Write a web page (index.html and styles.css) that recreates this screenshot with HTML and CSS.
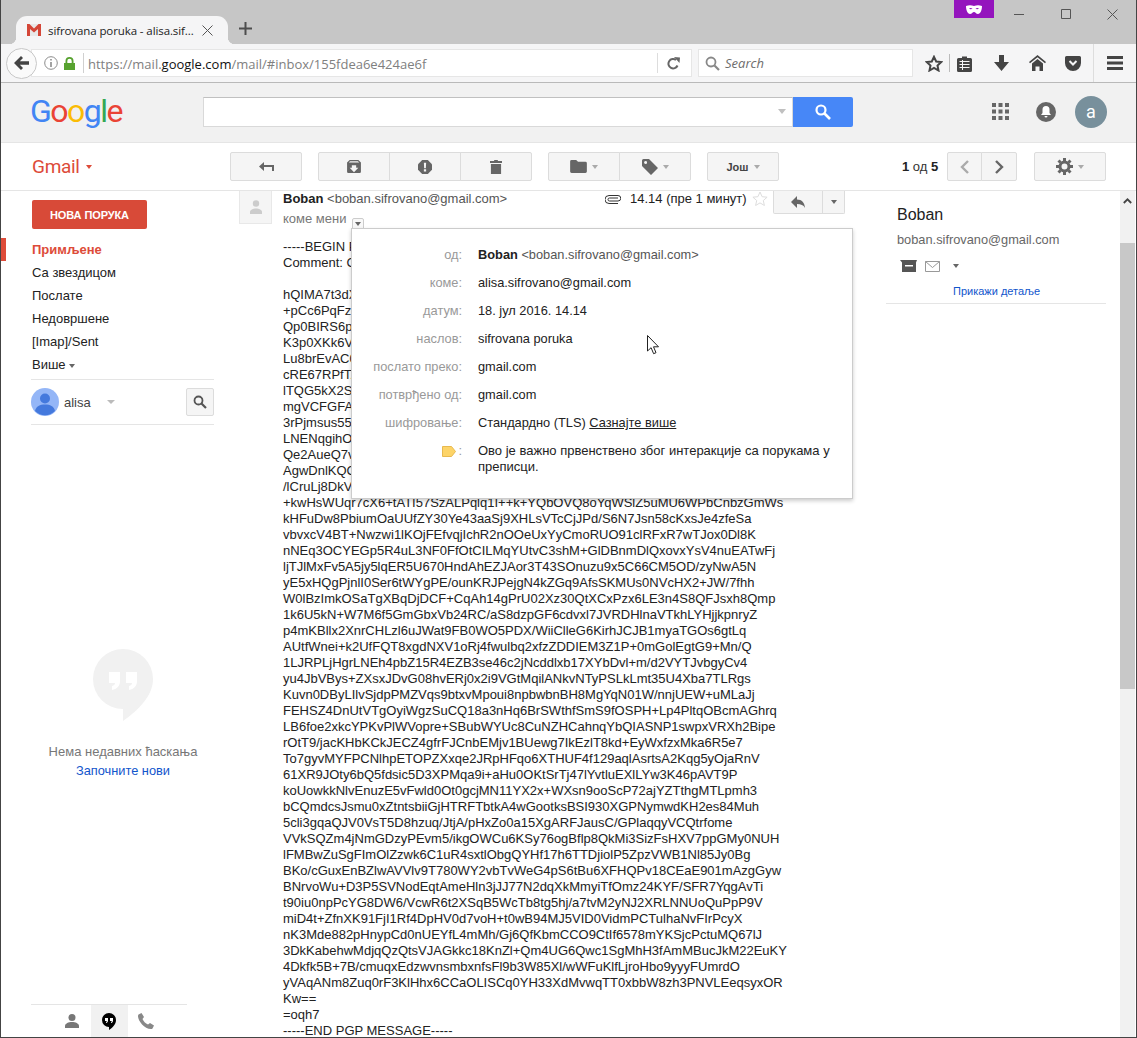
FILE: index.html
```html
<!DOCTYPE html>
<html lang="sr">
<head>
<meta charset="utf-8">
<title>sifrovana poruka</title>
<link rel="stylesheet" href="styles.css">
</head>
<body>
<div class="window">
  <div class="tabstrip">
    <div class="tab">
      <svg class="favicon" width="14" height="12" viewBox="0 0 14 12"><path fill="#e8e8e8" d="M0 0h14v12H0z"/><path fill="#d44638" d="M0 0h2.500L7 4.500 11.500 0H14v12h-3V5L7 8.500 3 5v7H0z"/></svg>
      <span class="tab-title">sifrovana poruka - alisa.sif...</span>
      <svg class="tab-close" width="11" height="11" viewBox="0 0 11 11"><path d="M.5.500l10 10M10.500.500l-10 10" stroke="#555" fill="none"/></svg>
    </div>
    <svg class="newtab" width="13" height="13" viewBox="0 0 13 13"><path d="M6.500 0v13M0 6.500h13" stroke="#4d4d4d" stroke-width="2" fill="none"/></svg>
    <div class="winctl">
      <div class="mask"><svg width="16" height="9" viewBox="0 0 16 9"><path fill="#fff" fill-rule="evenodd" d="M0 1c3-1.300 5.500-1 8 0 2.500-1 5-1.300 8 0 0 4-1.500 8-4 8-2 0-2.500-2-4-2s-2 2-4 2C1.500 9 0 5 0 1zm3 2.500c1 1 2.500 1 3.500.3C5.500 2.800 4 2.700 3 3.500zm10 0c-1-.8-2.500-.7-3.500.3 1 .7 2.500.7 3.500-.3z"/></svg></div>
      <svg class="ctl-min" width="10" height="1" viewBox="0 0 10 1"><path d="M0 .5h10" stroke="#555" fill="none"/></svg>
      <svg class="ctl-max" width="10" height="10" viewBox="0 0 10 10"><path d="M.5.500h9v9h-9z" stroke="#555" fill="none"/></svg>
      <svg class="ctl-close" width="11" height="11" viewBox="0 0 11 11"><path d="M.5.500l10 10M10.500.500l-10 10" stroke="#555" fill="none"/></svg>
    </div>
  </div>

  <div class="navbar">
    <div class="backbtn"><svg width="15" height="14" viewBox="0 0 15 14"><path fill="#444" d="M7 0l2 2-3.200 3.200H15v3.600H5.800L9 12l-2 2-7-7z"/></svg></div>
    <div class="urlbar">
      <svg class="info" width="14" height="14" viewBox="0 0 14 14"><circle cx="7" cy="7" r="6.300" fill="none" stroke="#8c8c8c"/><path d="M6.200 3h1.600v1.600H6.200zM6.200 6h1.600v5H6.200z" fill="#8c8c8c"/></svg>
      <svg class="lock" width="11" height="13" viewBox="0 0 11 13"><path fill="#57a22f" d="M0 6h1.500V4a4 4 0 0 1 8 0v2H11v7H0zm3.300 0h4.400V4a2.200 2.200 0 0 0-4.400 0z"/></svg>
      <span class="url-sep"></span>
      <span class="url">https://mail.<b>google.com</b>/mail/#inbox/155fdea6e424ae6f</span>
      <span class="url-sep2"></span>
      <svg class="reload" width="13" height="13" viewBox="0 0 13 13"><path fill="none" stroke="#666" stroke-width="2" d="M10.500 8.500A4.700 4.700 0 1 1 9 3"/><path fill="#666" d="M7 0l6 .5L12.500 6z"/></svg>
    </div>
    <div class="ffsearch">
      <svg width="15" height="15" viewBox="0 0 15 15"><circle cx="6" cy="6" r="4.500" fill="none" stroke="#888" stroke-width="1.800"/><path d="M9.500 9.500l4.500 4.500" stroke="#888" stroke-width="2.200"/></svg>
      <span>Search</span>
    </div>
    <div class="tools">
      <svg class="t-star" width="18" height="17" viewBox="0 0 18 17"><path fill="none" stroke="#444" stroke-width="2" d="M9 1.800l2.200 4.700 5 .6-3.700 3.400 1 5L9 13l-4.500 2.500 1-5L1.800 7.100l5-.6z"/></svg>
      <span class="t-sep"></span>
      <svg class="t-clip" width="15" height="17" viewBox="0 0 15 17"><path fill="#444" d="M1.500 3H5V1.500h5V3h3.500A1.500 1.500 0 0 1 15 4.500v11a1.500 1.500 0 0 1-1.500 1.500h-12A1.500 1.500 0 0 1 0 15.500v-11A1.500 1.500 0 0 1 1.500 3z"/><path stroke="#f5f5f6" d="M2.500 6.500h10M2.500 9.500h10M2.500 12.500h10" fill="none"/><path stroke="#f5f5f6" d="M5.500 5v10" fill="none"/></svg>
      <svg class="t-down" width="15" height="16" viewBox="0 0 15 16"><path fill="#444" d="M5 0h5v7h5l-7.500 9L0 7h5z"/></svg>
      <svg class="t-home" width="17" height="16" viewBox="0 0 17 16"><path fill="#444" d="M8.500 0L17 7l-1 1.200-7.500-6-7.500 6L0 7zM8.500 4L14 8.500V16h-3.500v-4.500h-4V16H3V8.500z"/></svg>
      <svg class="t-pocket" width="16" height="15" viewBox="0 0 16 15"><path fill="#444" d="M1.500 0h13A1.500 1.500 0 0 1 16 1.500V7a8 8 0 0 1-16 0V1.500A1.500 1.500 0 0 1 1.500 0z"/><path d="M4.500 5L8 8.500 11.500 5" fill="none" stroke="#f5f5f6" stroke-width="2"/></svg>
      <span class="t-sep2"></span>
      <svg class="t-menu" width="16" height="14" viewBox="0 0 16 14"><path fill="#444" d="M0 0h16v3H0zM0 5.500h16v3H0zM0 11h16v3H0z"/></svg>
    </div>
  </div>

  <header class="ghead">
    <div class="glogo"><i class="c-b">G</i><i class="c-r">o</i><i class="c-y">o</i><i class="c-b">g</i><i class="c-g">l</i><i class="c-r">e</i></div>
    <div class="gsearch"><span class="gcaret"></span></div>
    <div class="gsearch-btn"><svg width="16" height="16" viewBox="0 0 16 16"><circle cx="6" cy="6" r="4.500" fill="none" stroke="#fff" stroke-width="2.200"/><path d="M9.500 9.500L15 15" stroke="#fff" stroke-width="2.600"/></svg></div>
    <div class="apps"><svg width="17" height="17" viewBox="0 0 17 17"><path fill="#666" d="M0 0h4v4H0zM6.500 0h4v4h-4zM13 0h4v4h-4zM0 6.500h4v4H0zM6.500 6.500h4v4h-4zM13 6.500h4v4h-4zM0 13h4v4H0zM6.500 13h4v4h-4zM13 13h4v4h-4z"/></svg></div>
    <div class="bell"><svg width="12" height="12" viewBox="0 0 12 12"><path fill="#fff" d="M6 0a3.500 3.500 0 0 1 3.500 3.500V7L11 9H1l1.500-2V3.500A3.500 3.500 0 0 1 6 0zM4.500 10h3a1.500 1.500 0 0 1-3 0z"/></svg></div>
    <div class="avatar">a</div>
  </header>

  <div class="actionbar">
    <div class="gmail">Gmail<span class="caret red"></span></div>
    <div class="btn w72"><svg width="15" height="9" viewBox="0 0 15 9"><path fill="#666" d="M5 0v3h10v6h-2V5H5v4L0 4.500z"/></svg></div>
    <div class="group g1">
      <div class="btn w72"><svg width="14" height="13" viewBox="0 0 16 15"><path fill="#666" d="M3 0h10l3 3v10.500a1.500 1.500 0 0 1-1.500 1.500h-13A1.500 1.500 0 0 1 0 13.500V3zM5.500 6v3H3l5 5 5-5h-2.500V6z"/><path fill="#f5f5f5" d="M2 3l1.500-1.500h9L14 3z"/></svg></div>
      <div class="btn w72"><svg width="14" height="14" viewBox="0 0 15 15"><path fill="#666" d="M4.500 0h6L15 4.500v6L10.500 15h-6L0 10.500v-6z"/><path fill="#f5f5f5" d="M6.300 3h2.400l-.3 5.800H6.600zM6.300 10h2.400v2.200H6.300z"/></svg></div>
      <div class="btn w72"><svg width="12" height="14" viewBox="0 0 13 16" preserveAspectRatio="none"><path fill="#666" d="M4.500 0h4v1H13v2.500H0V1h4.500zM1 4.500h11V16H1z"/></svg></div>
    </div>
    <div class="group g2">
      <div class="btn w72"><svg width="17" height="13" viewBox="0 0 18 14"><path fill="#666" d="M0 1.500A1.500 1.500 0 0 1 1.500 0h5l2 2h8A1.500 1.500 0 0 1 18 3.500v9a1.500 1.500 0 0 1-1.500 1.500h-15A1.500 1.500 0 0 1 0 12.500z"/></svg><span class="caret"></span></div>
      <div class="btn w72"><svg width="16" height="16" viewBox="0 0 16 16"><path fill="#666" d="M0 1.500A1.500 1.500 0 0 1 1.500 0H7l9 9-7 7-9-9zM3.500 2A1.500 1.500 0 1 0 3.600 5 1.500 1.500 0 0 0 3.500 2z"/></svg><span class="caret"></span></div>
    </div>
    <div class="btn more">Још<span class="caret"></span></div>
    <div class="pager"><b>1</b> од <b>5</b></div>
    <div class="group g3">
      <div class="btn w35"><svg width="9" height="14" viewBox="0 0 9 14"><path d="M8 1L2 7l6 6" fill="none" stroke="#aaa" stroke-width="2.400"/></svg></div>
      <div class="btn w36"><svg width="9" height="14" viewBox="0 0 9 14"><path d="M1 1l6 6-6 6" fill="none" stroke="#666" stroke-width="2.400"/></svg></div>
    </div>
    <div class="btn gear"><svg width="17" height="17" viewBox="0 0 17 17"><circle cx="8.500" cy="8.500" r="4.500" fill="none" stroke="#666" stroke-width="3"/><path stroke="#666" stroke-width="3" d="M8.500 0v3M8.500 14v3M0 8.500h3M14 8.500h3M2.500 2.500l2 2M12.500 12.500l2 2M14.500 2.500l-2 2M4.500 12.500l-2 2"/></svg><span class="caret"></span></div>
  </div>

  <div class="main">
    <nav class="side">
      <div class="compose">НОВА ПОРУКА</div>
      <ul class="folders">
        <li class="active">Примљене</li>
        <li>Са звездицом</li>
        <li>Послате</li>
        <li>Недовршене</li>
        <li>[Imap]/Sent</li>
        <li>Више<span class="caret dark"></span></li>
      </ul>
      <div class="me">
        <svg width="28" height="28" viewBox="0 0 28 28"><circle cx="14" cy="14" r="14" fill="#94b6f7"/><circle cx="14" cy="10.500" r="5" fill="#4479dd"/><path fill="#4479dd" d="M4 23c1-5 5-6.500 10-6.500S23 18 24 23a14 14 0 0 1-20 0z"/></svg>
        <span class="me-name">alisa</span>
        <span class="caret light"></span>
        <div class="me-search"><svg width="14" height="14" viewBox="0 0 14 14"><circle cx="5.500" cy="5.500" r="4" fill="none" stroke="#555" stroke-width="1.800"/><path d="M8.500 8.500L13 13" stroke="#555" stroke-width="2.200"/></svg></div>
      </div>
      <div class="hangouts">
        <svg width="60" height="72" viewBox="0 0 60 72"><path fill="#f1f1f1" d="M30 0a30 30 0 0 1 30 30c0 16-13 30-30 42V60A30 30 0 0 1 30 0z"/><path fill="#fff" d="M16 23h11v9c0 5-3 8-8 9v-4c2-.5 3-1.500 3-3h-6zM33 23h11v9c0 5-3 8-8 9v-4c2-.5 3-1.500 3-3h-6z"/></svg>
        <p class="h-empty">Нема недавних ћаскања</p>
        <p class="h-start">Започните нови</p>
      </div>
      <div class="h-tabs">
        <div class="h-tab"><svg width="14" height="14" viewBox="0 0 14 14"><circle cx="7" cy="3.500" r="3.500" fill="#777"/><path fill="#777" d="M0 14v-2c0-2.500 3.500-4 7-4s7 1.500 7 4v2z"/></svg></div>
        <div class="h-tab on"><svg width="14" height="17" viewBox="0 0 14 17"><path d="M7 0a7 7 0 0 1 7 7c0 4-3 7.500-7 10v-3A7 7 0 0 1 7 0z"/><path fill="#fff" d="M3 5h3v2.500c0 1.500-.8 2.300-2 2.500V9c.5 0 .8-.4.8-1H3zM8 5h3v2.500c0 1.500-.8 2.300-2 2.500V9c.5 0 .8-.4.8-1H8z"/></svg></div>
        <div class="h-tab"><svg width="16" height="16" viewBox="0 0 16 16"><path fill="#888" d="M3.500 0l2.500 4-1.500 2c.8 2 3 4.500 5.500 5.500l2-1.500 4 2.500-1.500 3c-.3.400-1 .5-1.500.5C6.500 16 0 8 0 3c0-.6.200-1.200.5-1.500z"/></svg></div>
      </div>
    </nav>

    <section class="msg">
      <div class="sender-pic"><svg width="14" height="14" viewBox="0 0 14 14"><circle cx="7" cy="3.500" r="3.200" fill="#ccc"/><path fill="#ccc" d="M1 14v-2c0-2 3-3.500 6-3.500s6 1.500 6 3.500v2z"/></svg></div>
      <div class="msg-body">
        <div class="msg-top">
          <span class="from"><b>Boban</b> &lt;boban.sifrovano@gmail.com&gt;</span>
          <svg class="clip" width="16" height="9" viewBox="0 0 16 9"><path fill="none" stroke="#333" d="M13 3H4.500a1.500 1.500 0 0 0 0 3H13a2.500 2.500 0 0 0 0-5.500H4a3.500 3.500 0 0 0 0 8h9"/></svg>
          <span class="time">14.14 (пре 1 минут)</span>
          <svg class="mstar" width="16" height="15" viewBox="0 0 16 15"><path fill="none" stroke="#ddd" d="M8 1l2.100 4.700 5 .5-3.800 3.300 1.100 5L8 11.900l-4.400 2.600 1.100-5L.9 6.200l5-.5z"/></svg>
          <div class="replybtn">
            <div class="r-main"><svg width="14" height="12" viewBox="0 0 14 12"><path fill="#666" d="M6 0v3.500c5 0 7.500 3 8 8.500-1.500-3-4-4-8-4v4L0 6z"/></svg></div>
            <div class="r-more"><span class="caret dark"></span></div>
          </div>
        </div>
        <div class="tome">коме мени <span class="tome-btn"><span class="caret dark small"></span></span></div>
        <pre class="pgp">-----BEGIN PGP MESSAGE-----
Comment: GPGTools - https://gpgtools.org

hQIMA7t3dX
+pCc6PqFz
Qp0BIRS6p
K3p0XKk6V
Lu8brEvAC0
cRE67RPfTA
lTQG5kX2S
mgVCFGFA
3rPjmsus55
LNENqgihO
Qe2AueQ7v
AgwDnlKQC
/lCruLj8DkV
+kwHsWUqr7cX6+tATI57SzALPqlq1I++k+YQbOVQ8oYqWSlZ5uMU6WPbCnbzGmWs
kHFuDw8PbiumOaUUfZY30Ye43aaSj9XHLsVTcCjJPd/S6N7Jsn58cKxsJe4zfeSa
vbvxcV4BT+Nwzwi1lKOjFEfvqjIchR2nOOeUxYyCmoRUO91clRFxR7wTJox0Dl8K
nNEq3OCYEGp5R4uL3NF0FfOtCILMqYUtvC3shM+GlDBnmDlQxovxYsV4nuEATwFj
ljTJlMxFv5A5jy5lqER5U670HndAhEZJAor3T43SOnuzu9x5C66CM5OD/zyNwA5N
yE5xHQgPjnlI0Ser6tWYgPE/ounKRJPejgN4kZGq9AfsSKMUs0NVcHX2+JW/7fhh
W0lBzImkOSaTgXBqDjDCF+CqAh14gPrU02Xz30QtXCxPzx6LE3n4S8QFJsxh8Qmp
1k6U5kN+W7M6f5GmGbxVb24RC/aS8dzpGF6cdvxl7JVRDHlnaVTkhLYHjjkpnryZ
p4mKBllx2XnrCHLzl6uJWat9FB0WO5PDX/WiiClleG6KirhJCJB1myaTGOs6gtLq
AUtfWnei+k2UfFQT8xgdNXV1oRj4fwulbq2xfzZDDIEM3Z1P+0mGolEgtG9+Mn/Q
1LJRPLjHgrLNEh4pbZ15R4EZB3se46c2jNcddlxb17XYbDvl+m/d2VYTJvbgyCv4
yu4JbVBys+ZXsxJDvG08hvERj0x2i9VGtMqilANkvNTyPSLkLmt35U4Xba7TLRgs
Kuvn0DByLIlvSjdpPMZVqs9btxvMpoui8npbwbnBH8MgYqN01W/nnjUEW+uMLaJj
FEHSZ4DnUtVTgOyiWgzSuCQ18a3nHq6BrSWthfSmS9fOSPH+Lp4PltqOBcmAGhrq
LB6foe2xkcYPKvPlWVopre+SBubWYUc8CuNZHCahnqYbQIASNP1swpxVRXh2Bipe
rOtT9/jacKHbKCkJECZ4gfrFJCnbEMjv1BUewg7IkEzlT8kd+EyWxfzxMka6R5e7
To7gyvMYFPCNlhpETOPZXxqe2JRpHFqo6XTHUF4f129aqlAsrtsA2Kqg5yOjaRnV
61XR9JOty6bQ5fdsic5D3XPMqa9i+aHu0OKtSrTj47lYvtluEXlLYw3K46pAVT9P
koUowkkNlvEnuzE5vFwld0Ot0gcjMN11YX2x+WXsn9ooScP72ajYZTthgMTLpmh3
bCQmdcsJsmu0xZtntsbiiGjHTRFTbtkA4wGootksBSI930XGPNymwdKH2es84Muh
5cli3gqaQJV0VsT5D8hzuq/JtjA/pHxZo0a15XgARFJausC/GPlaqqyVCQtrfome
VVkSQZm4jNmGDzyPEvm5/ikgOWCu6KSy76ogBflp8QkMi3SizFsHXV7ppGMy0NUH
lFMBwZuSgFImOlZzwk6C1uR4sxtlObgQYHf17h6TTDjiolP5ZpzVWB1Nl85Jy0Bg
BKo/cGuxEnBZlwAVVlv9T780WY2vbTvWeG4pS6tBu6XFHQPv18CEaE901mAzgGyw
BNrvoWu+D3P5SVNodEqtAmeHln3jJJ77N2dqXkMmyiTfOmz24KYF/SFR7YqgAvTi
t90iu0npPcYG8DW6/VcwR6t2XSqB5WcTb8tg5hj/a7tvM2yNJ2XRLNNUoQuPpP9V
miD4t+ZfnXK91FjI1Rf4DpHV0d7voH+t0wB94MJ5VID0VidmPCTulhaNvFIrPcyX
nK3Mde882pHnypCd0nUEYfL4mMh/Gj6QfKbmCCO9CtIf6578mYKSjcPctuMQ67lJ
3DkKabehwMdjqQzQtsVJAGkkc18KnZl+Qm4UG6Qwc1SgMhH3fAmMBucJkM22EuKY
4Dkfk5B+7B/cmuqxEdzwvnsmbxnfsFl9b3W85Xl/wWFuKlfLjroHbo9yyyFUmrdO
yVAqANm8Zuq0rF3KlHhx6CCaOLISCq0YH33XdMvwqTT0xbbW8zh3PNVLEeqsyxOR
Kw==
=oqh7
-----END PGP MESSAGE-----</pre>
      </div>
    </section>

    <aside class="contact">
      <div class="c-name">Boban</div>
      <div class="c-mail">boban.sifrovano@gmail.com</div>
      <div class="c-icons">
        <svg width="17" height="12" viewBox="0 0 17 12"><path fill="#555" d="M0 0h17l-1 2.500V12H2V2.500z"/><path fill="#fff" d="M5 5h8v1.500H5z"/></svg>
        <svg width="15" height="11" viewBox="0 0 15 11"><path fill="none" stroke="#999" d="M.5.500h14v10H.5zM.5.500l7 6 7-6"/></svg>
        <span class="caret dark small"></span>
      </div>
      <div class="c-link">Прикажи детаље</div>
    </aside>

    <div class="scrollbar">
      <svg width="9" height="6" viewBox="0 0 9 6"><path d="M.8 5l3.700-3.700L8.200 5" fill="none" stroke="#444" stroke-width="1.800"/></svg>
      <div class="thumb"></div>
    </div>

    <div class="popup">
      <div class="row"><span class="lab">од:</span><span class="val"><b>Boban</b> <span class="addr">&lt;boban.sifrovano@gmail.com&gt;</span></span></div>
      <div class="row"><span class="lab">коме:</span><span class="val">alisa.sifrovano@gmail.com</span></div>
      <div class="row"><span class="lab">датум:</span><span class="val">18. јул 2016. 14.14</span></div>
      <div class="row"><span class="lab">наслов:</span><span class="val">sifrovana poruka</span></div>
      <div class="row"><span class="lab">послато преко:</span><span class="val">gmail.com</span></div>
      <div class="row"><span class="lab">потврђено од:</span><span class="val">gmail.com</span></div>
      <div class="row"><span class="lab">шифровање:</span><span class="val">Стандардно (TLS) <u>Сазнајте више</u></span></div>
      <div class="row note"><span class="lab"><svg width="14" height="11" viewBox="0 0 14 11"><path fill="#fdd468" stroke="#e8b94f" d="M.5.500h9L13.500 5.500l-4 5h-9z"/></svg>:</span><span class="val">Ово је важно првенствено због интеракције са порукама у преписци.</span></div>
    </div>

    <svg class="cursor" width="13" height="20" viewBox="0 0 13 20"><path fill="#fff" stroke="#222" d="M.5.500v15.500l3.600-3.300 2.500 6 2.400-1-2.500-5.900h5z"/></svg>
  </div>
</div>
</body>
</html>
```

FILE: styles.css
```css
* { box-sizing: border-box; }
html, body { margin: 0; padding: 0; background: #fff; }
body { font-family: "Liberation Sans", Arial, sans-serif; font-size: 13px; color: #222; }
.window { width: 1137px; height: 1038px; overflow: hidden; position: relative; border-left: 1px solid #444; border-right: 1px solid #444; border-bottom: 1px solid #444; display: flex; flex-direction: column; }

/* tab strip */
.tabstrip { height: 44px; flex: none; background: #c6c6c6; display: flex; align-items: flex-end; padding-left: 15px; }
.tab { width: 212px; height: 28px; background: #f5f5f6; border-radius: 11px 11px 0 0; display: flex; align-items: center; padding: 0 11px; position: relative; }
.tab::before, .tab::after { content: ""; position: absolute; bottom: 0; width: 7px; height: 7px; }
.tab::before { left: -7px; background: radial-gradient(circle at 0 0, transparent 7px, #f5f5f6 7.500px); }
.tab::after { right: -7px; background: radial-gradient(circle at 100% 0, transparent 7px, #f5f5f6 7.500px); }
.favicon { flex: none; margin-right: 7px; }
.tab-title { font-family: "Open Sans", sans-serif; font-size: 11.500px; letter-spacing: -.1px; color: #222; white-space: nowrap; width: 150px; overflow: hidden; }
.tab-close { margin-left: 4px; flex: none; }
.newtab { margin: 0 0 9px 11px; }
.winctl { margin-left: auto; height: 44px; display: flex; align-items: flex-start; padding-right: 18px; }
.mask { width: 40px; height: 18px; background: #9414bd; display: flex; align-items: center; justify-content: center; margin-right: 20px; }
.ctl-min { margin: 14px 37px 0 0; }
.ctl-max { margin: 9px 36px 0 0; }
.ctl-close { margin-top: 9px; }

/* browser toolbar */
.navbar { height: 39px; flex: none; background: #f5f5f6; border-bottom: 1px solid #b9b9b9; display: flex; align-items: center; padding-left: 5px; }
.backbtn { width: 31px; height: 31px; border-radius: 50%; border: 1px solid #c8c8c8; background: #fafafa; display: flex; align-items: center; justify-content: center; position: relative; z-index: 1; flex: none; }
.urlbar { width: 661px; height: 28px; margin-left: -6px; background: #fff; border: 1px solid #e6e6e6; display: flex; align-items: center; padding-left: 10px; flex: none; }
.info { margin-left: 2px; flex: none; }
.lock { margin-left: 6px; flex: none; }
.url-sep { width: 1px; height: 20px; background: #d0d0d0; margin: 0 4px 0 8px; flex: none; }
.url { font-family: "Open Sans", sans-serif; font-size: 13px; color: #808080; white-space: nowrap; width: 569px; padding-top: 1px; flex: none; }
.url b { font-weight: 400; color: #111; }
.url-sep2 { width: 1px; height: 20px; background: #ddd; flex: none; }
.reload { margin-left: 9px; flex: none; }
.ffsearch { width: 215px; height: 28px; margin-left: 6px; background: #fff; border: 1px solid #e6e6e6; display: flex; align-items: center; padding-left: 6px; flex: none; }
.ffsearch span { font-family: "Open Sans", sans-serif; font-style: italic; font-size: 13px; color: #6d6d6d; margin-left: 5px; }
.tools { display: flex; align-items: center; flex: none; height: 100%; }
.t-star { margin-left: 12px; }
.t-sep { width: 1px; height: 18px; background: #bbb; margin-left: 6px; }
.t-clip { margin-left: 7px; }
.t-down { margin-left: 22px; }
.t-home { margin-left: 20px; }
.t-pocket { margin-left: 19px; }
.t-sep2 { width: 1px; height: 38px; background: #ddd; margin-left: 12px; }
.t-menu { margin-left: 13px; }

/* google header */
.ghead { height: 60px; flex: none; background: #f1f1f1; border-bottom: 1px solid #e5e5e5; display: flex; align-items: center; padding-left: 29px; }
.glogo { font-family: "Roboto", sans-serif; font-size: 32px; line-height: 37px; width: 173px; letter-spacing: -1.500px; margin-top: -2px; flex: none; }
.glogo i { font-style: normal; }
.c-b { color: #4285f4; } .c-r { color: #ea4335; } .c-y { color: #fbbc05; } .c-g { color: #34a853; }
.gsearch { width: 590px; height: 30px; background: #fff; border: 1px solid #d9d9d9; border-top-color: #c0c0c0; margin-top: -2px; display: flex; align-items: center; justify-content: flex-end; padding-right: 6px; flex: none; }
.gcaret { width: 0; height: 0; border: 4px solid transparent; border-top: 5px solid #c0c0c0; border-bottom: 0; }
.gsearch-btn { width: 60px; height: 30px; background: #4787f7; border-radius: 0 2px 2px 0; margin-top: -2px; display: flex; align-items: center; justify-content: center; flex: none; }
.apps { margin: -2px 0 0 139px; display: flex; }
.bell { width: 20px; height: 20px; border-radius: 50%; background: #666; margin: -2px 0 0 27px; display: flex; align-items: center; justify-content: center; }
.avatar { width: 32px; height: 32px; border-radius: 50%; background: #78909c; color: #fff; font-size: 18px; margin: -2px 0 0 19px; display: flex; align-items: center; justify-content: center; font-family: "Roboto", sans-serif; }

/* gmail action bar */
.actionbar { height: 48px; flex: none; background: #fff; border-bottom: 1px solid #e5e5e5; display: flex; align-items: center; padding-left: 31px; }
.gmail { font-family: "Roboto", sans-serif; font-size: 19px; letter-spacing: -.3px; color: #dd4b39; width: 198px; flex: none; display: flex; align-items: center; }
.caret { display: inline-block; width: 0; height: 0; border: 3.500px solid transparent; border-top: 4px solid #aaa; border-bottom: 0; margin-left: 5px; vertical-align: middle; }
.caret.red { border-top-color: #dd4b39; margin-left: 6px; }
.caret.dark { border-top-color: #666; }
.caret.light { border-top-color: #bbb; border-left-width: 4px; border-right-width: 4px; }
.caret.small { margin-left: 0; }
.btn { height: 29px; background: #f5f5f5; border: 1px solid #dcdcdc; border-radius: 2px; display: flex; align-items: center; justify-content: center; flex: none; }
.w72 { width: 72px; } .w35 { width: 35px; } .w36 { width: 36px; }
.group { display: flex; flex: none; }
.group .btn { border-radius: 0; margin-right: -1px; }
.group .btn:first-child { border-radius: 2px 0 0 2px; }
.group .btn:last-child { border-radius: 0 2px 2px 0; margin-right: 0; }
.g1 { margin-left: 16px; }
.g2 { margin-left: 16px; }
.more { width: 72px; margin-left: 16px; font-size: 11px; color: #444; font-weight: 700; }
.pager { width: 40px; margin-left: 123px; font-size: 13px; color: #333; white-space: nowrap; flex: none; }
.pager b { color: #222; }
.g3 { margin-left: 5px; }
.gear { width: 72px; margin-left: 17px; }

/* main */
.main { flex: 1; display: flex; position: relative; min-height: 0; }
.side { width: 238px; flex: none; display: flex; flex-direction: column; padding-top: 9px; }
.compose { width: 115px; height: 29px; margin-left: 31px; background: #d84a38; border-radius: 2px; color: #fff; font-weight: 700; font-size: 11px; letter-spacing: -.1px; display: flex; align-items: center; justify-content: center; flex: none; }
.folders { list-style: none; margin: 9px 0 0; padding: 0; }
.folders::after { content: ""; display: block; width: 183px; height: 1px; margin: 3px 0 0 30px; background: #e5e5e5; }
.folders li { height: 23px; line-height: 23px; padding-left: 31px; color: #222; }
.folders li.active { color: #dd4b39; font-weight: 700; border-left: 5px solid #dd4b39; padding-left: 26px; }
.folders .caret { margin-left: 3px; }
.me { width: 183px; margin-left: 30px; display: flex; align-items: center; padding: 8px 0; height: 45px; border-bottom: 1px solid #e5e5e5; flex: none; }
.me-name { margin-left: 5px; color: #444; width: 38px; }
.me-search { width: 28px; height: 28px; margin-left: auto; background: #f5f5f5; border: 1px solid #dcdcdc; border-radius: 2px; display: flex; align-items: center; justify-content: center; }
.hangouts { width: 194px; margin: 224px 0 0 25px; display: flex; flex-direction: column; align-items: center; flex: none; }
.h-empty { margin: 23px 0 0; font-size: 13px; line-height: 16px; color: #777; white-space: nowrap; }
.h-start { margin: 3px 0 0; font-size: 12.800px; line-height: 16px; color: #15c; }
.h-tabs { width: 156px; height: 33px; margin: auto 0 0 30px; border-top: 1px solid #e5e5e5; display: flex; justify-content: center; flex: none; }
.h-tab { width: 37px; display: flex; align-items: center; justify-content: center; }
.h-tab.on { background: #f1f1f1; }

.msg { width: 599px; flex: none; display: flex; }
.sender-pic { width: 33px; height: 33px; background: #f5f5f5; border: 1px solid #e8e8e8; border-top: 0; display: flex; align-items: center; justify-content: center; flex: none; }
.msg-body { margin-left: 11px; width: 562px; flex: none; }
.msg-top { height: 19px; display: flex; align-items: flex-start; }
.from { width: 321px; line-height: 16px; color: #555; flex: none; }
.from b { color: #222; }
.clip { margin: 4px 0 0 1px; flex: none; }
.time { margin-left: 9px; width: 122px; line-height: 16px; color: #222; flex: none; white-space: nowrap; }
.mstar { flex: none; }
.replybtn { width: 72px; height: 23px; margin-left: 5px; display: flex; background: #f5f5f5; border: 1px solid #dcdcdc; border-top: 0; border-radius: 0 0 2px 2px; flex: none; }
.r-main { width: 49px; display: flex; align-items: center; justify-content: center; border-right: 1px solid #dcdcdc; }
.r-more { flex: 1; display: flex; align-items: center; justify-content: center; }
.r-more .caret { margin: 0; }
.tome { height: 29px; line-height: 18px; color: #777; }
.tome-btn { display: inline-flex; width: 12px; height: 12px; border: 1px solid #ccc; border-radius: 2px; align-items: center; justify-content: center; vertical-align: -3px; margin-left: 2px; background: #f8f8f8; }
.pgp { margin: 0; font-family: "Liberation Sans", Arial, sans-serif; font-size: 13px; line-height: 16px; color: #222; white-space: pre; }

.contact { width: 220px; margin-left: 48px; height: 113px; border-bottom: 1px solid #e5e5e5; padding: 15px 0 0 11px; flex: none; }
.c-name { font-size: 16px; line-height: 18px; color: #222; }
.c-mail { font-size: 12.800px; line-height: 16px; margin-top: 8px; color: #666; }
.c-icons { display: flex; align-items: center; margin: 11px 0 0 3px; height: 14px; }
.c-icons svg + svg { margin-left: 8px; }
.c-icons .caret { margin-left: 13px; }
.c-link { font-size: 11px; line-height: 14px; margin: 11px 0 0 56px; color: #15c; white-space: nowrap; }

.scrollbar { width: 15px; margin-left: auto; margin-right: 1px; background: #f1f1f1; display: flex; flex-direction: column; align-items: center; padding-top: 7px; flex: none; }
.thumb { width: 15px; height: 446px; margin-top: 39px; background: #c8c8c8; flex: none; }

.popup { position: absolute; left: 350px; top: 37px; width: 502px; height: 271px; background: #fff; border: 1px solid #ccc; box-shadow: 0 2px 4px rgba(0,0,0,.2); padding: 15px 0 0; }
.row { display: flex; min-height: 28px; font-size: 12.800px; line-height: 16px; padding-top: 3px; }
.row.note .val { font-size: 13px; }
.lab { width: 110px; text-align: right; color: #999; flex: none; white-space: nowrap; }
.lab svg { vertical-align: -2px; margin-right: 2px; }
.val { margin-left: 16px; color: #222; width: 358px; }
.addr { color: #555; }
.val u { color: #222; }
.cursor { position: absolute; left: 646px; top: 144px; }
```
